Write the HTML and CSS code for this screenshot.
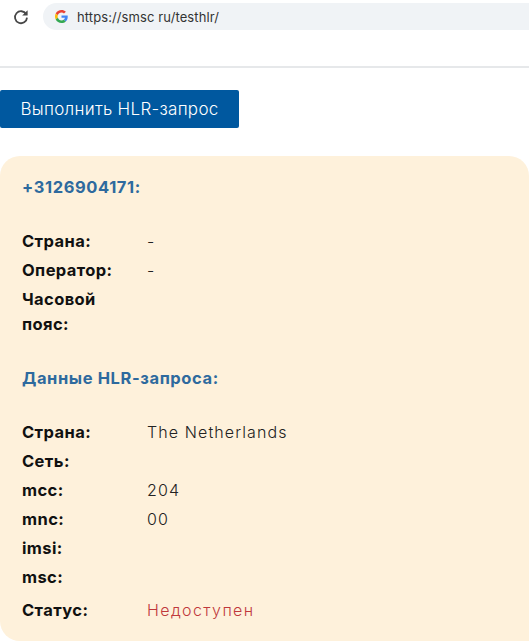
FILE: index.html
```html
<!DOCTYPE html>
<html lang="ru">
<head>
    <meta charset="UTF-8">
    <meta name="viewport" content="width=device-width, initial-scale=1.0">
    <title>HLR-запрос</title>
    <link rel="stylesheet" href="styles.css">
</head>
<body>
    <div class="browser-bar">
        <svg class="reload" width="16" height="16" viewBox="0 0 16 16">
            <path d="M13.2 5.200A6 6 0 1 0 14 8.600" fill="none" stroke="#474747" stroke-width="1.8"/>
            <path d="M14.600 1.200v5.400H9.200z" fill="#474747"/>
        </svg>
        <div class="address">
            <svg class="g-logo" width="13" height="13" viewBox="0 0 48 48">
                <path fill="#EA4335" d="M24 9.500c3.500 0 6.700 1.200 9.200 3.600l6.900-6.900C35.900 2.400 30.500 0 24 0 14.600 0 6.500 5.400 2.600 13.200l8 6.200C12.500 13.700 17.800 9.500 24 9.500z"/>
                <path fill="#4285F4" d="M47 24.500c0-1.600-.1-3.100-.4-4.500H24v9h12.900c-.6 3-2.200 5.500-4.800 7.200l7.700 6C44.300 37.900 47 31.800 47 24.500z"/>
                <path fill="#FBBC05" d="M10.500 28.600c-.5-1.400-.8-3-.8-4.600s.3-3.200.8-4.600l-8-6.200C.9 16.500 0 20.100 0 24s.9 7.500 2.600 10.800z"/>
                <path fill="#34A853" d="M24 48c6.500 0 11.900-2.100 15.900-5.800l-7.700-6c-2.200 1.400-4.900 2.300-8.200 2.300-6.200 0-11.500-4.200-13.400-9.900l-8 6.200C6.500 42.600 14.600 48 24 48z"/>
            </svg>
            <span class="url">https://smsc ru/testhlr/</span>
        </div>
    </div>

    <div class="action">
        <button class="btn-hlr" type="button">Выполнить HLR-запрос</button>
    </div>

    <div class="result">
        <h3 class="phone">+3126904171:</h3>
        <div class="rows">
            <div class="label">Страна:</div><div class="value">-</div>
            <div class="label">Оператор:</div><div class="value">-</div>
            <div class="label">Часовой пояс:</div><div class="value"></div>
        </div>

        <h3 class="section">Данные HLR-запроса:</h3>
        <div class="rows">
            <div class="label">Страна:</div><div class="value">The Netherlands</div>
            <div class="label">Сеть:</div><div class="value"></div>
            <div class="label">mcc:</div><div class="value">204</div>
            <div class="label">mnc:</div><div class="value">00</div>
            <div class="label">imsi:</div><div class="value"></div>
            <div class="label">msc:</div><div class="value"></div>
        </div>
        <div class="rows status">
            <div class="label">Статус:</div><div class="value unavailable">Недоступен</div>
        </div>
    </div>
</body>
</html>
```

FILE: styles.css
```css
* {
    margin: 0;
    padding: 0;
    box-sizing: border-box;
}

body {
    font-family: 'Inter', 'Liberation Sans', sans-serif;
    background-color: #fff;
    color: #111;
    height: 641px;
    overflow: hidden;
}

.browser-bar {
    display: flex;
    align-items: flex-start;
    height: 68px;
    padding: 3px 0 0 13px;
    border-bottom: 2px solid #e6e8ea;
}

.reload {
    margin: 6px 14px 0 0;
}

.address {
    display: flex;
    align-items: center;
    flex: 1;
    height: 27px;
    padding-left: 12px;
    background-color: #f0f3f6;
    border-radius: 14px 0 0 14px;
}

.g-logo {
    margin-right: 9px;
}

.url {
    font-size: 13px;
    letter-spacing: 0.1px;
    color: #333;
}

.action {
    margin-top: 22px;
}

.btn-hlr {
    display: block;
    width: 239px;
    height: 38px;
    font-family: inherit;
    font-size: 17px;
    font-weight: 300;
    letter-spacing: 0.3px;
    color: #fff;
    background-color: #00589f;
    border: none;
    border-radius: 2px;
}

.result {
    margin-top: 28px;
    height: 485px;
    padding: 22px 22px 0;
    background-color: #fef1db;
    border-radius: 20px 20px 0 20px;
}

.phone,
.section {
    font-size: 16.5px;
    font-weight: 700;
    letter-spacing: 0.6px;
    line-height: 18px;
    color: #2e6a9e;
}

.section {
    margin-top: 32px;
}

.rows {
    display: grid;
    grid-template-columns: 125px 1fr;
    grid-auto-rows: minmax(29px, auto);
    align-items: start;
    margin-top: 33px;
    font-size: 16px;
    line-height: 25px;
}

.label {
    font-size: 16.5px;
    font-weight: 700;
    letter-spacing: 0.4px;
    padding-right: 30px;
    color: #111;
}

.value {
    font-weight: 300;
    letter-spacing: 1.1px;
    color: #222;
}

.status {
    margin-top: 4px;
}

.unavailable {
    letter-spacing: 1.4px;
    color: #c0383c;
}
```
